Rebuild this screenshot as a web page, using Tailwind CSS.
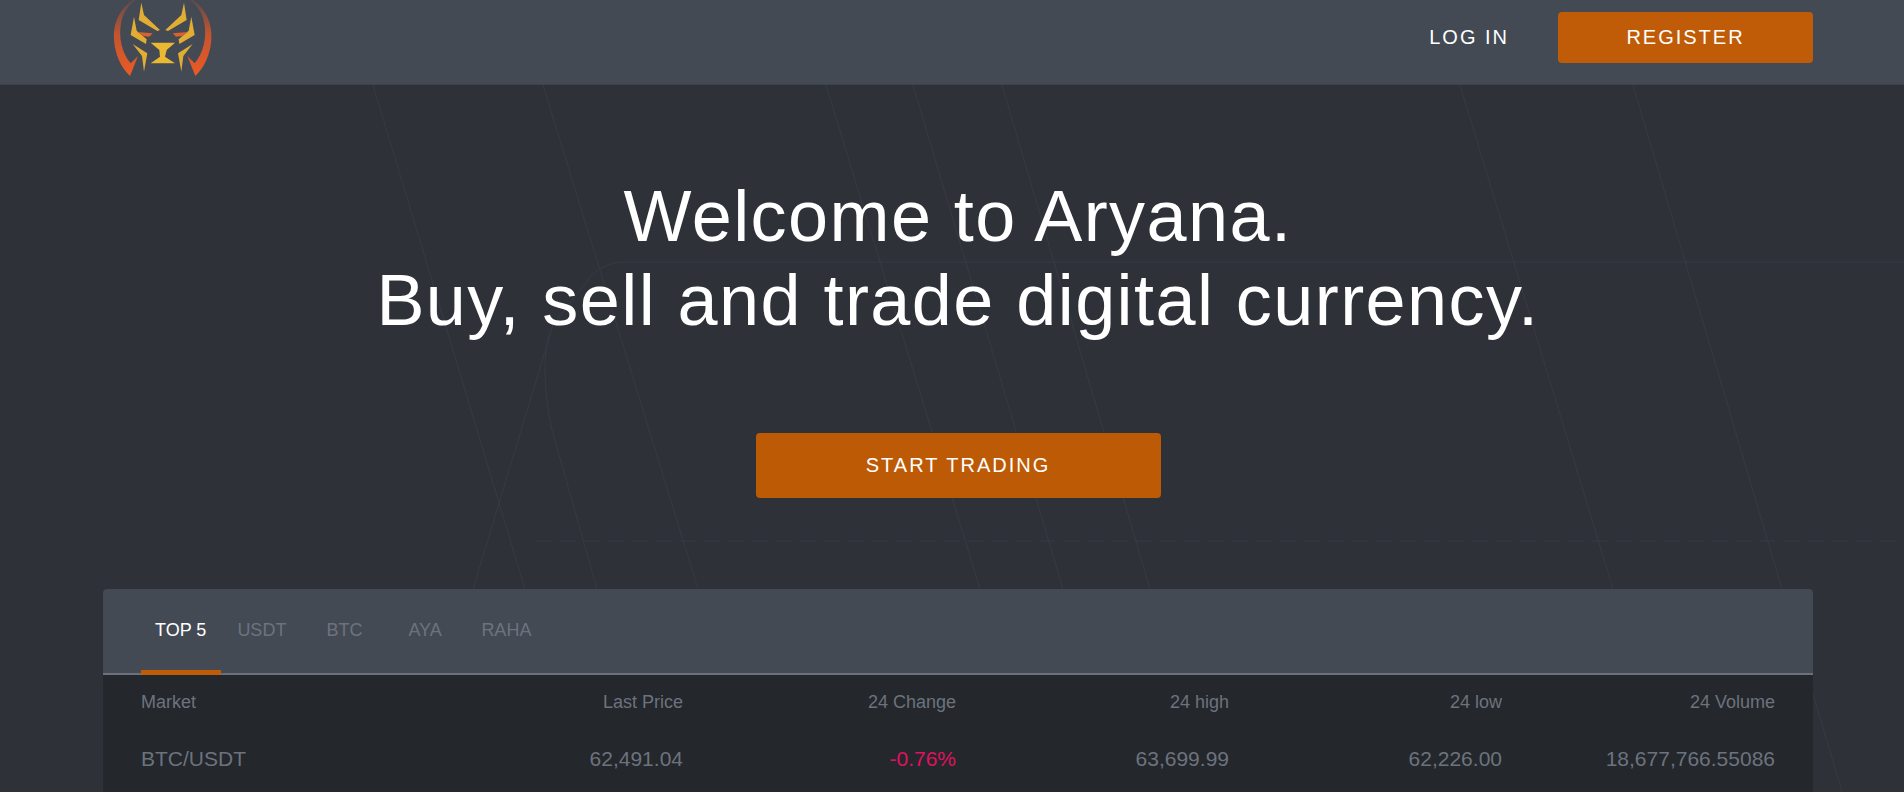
<!DOCTYPE html>
<html lang="en">
<head>
    <meta charset="UTF-8">
    <meta name="viewport" content="width=device-width, initial-scale=1.0">
    <title>Aryana</title>
    <script src="https://cdn.jsdelivr.net/npm/@tailwindcss/browser@4"></script>
</head>
<body class="relative h-[792px] overflow-hidden bg-[#2e3138] font-['Liberation_Sans',Arial,sans-serif]">
    <!-- background lines -->
    <svg class="absolute top-0 left-0" width="1904" height="792" fill="none" stroke="#363a42" stroke-width="1">
        <path d="M373 85L525 589"/>
        <path d="M543 85L698 589"/>
        <path d="M826 85L980 589"/>
        <path d="M913 85L1063 589"/>
        <path d="M1002 85L1150 589"/>
        <path d="M1460 85L1613 589"/>
        <path d="M1633 85L1842 792"/>
        <path d="M1904 262H625Q605 262 592 275L553 325Q545 340 545 370Q545 400 552 430L597 589"/>
        <path d="M553 325L473 589"/>
        <path d="M535 541H1904" stroke-dasharray="16 8"/>
    </svg>

    <header class="relative flex h-[85px] items-start justify-between overflow-hidden border-b border-[#3d424c] bg-[#434a54] pr-[91px] pl-[110px]">
        <svg width="110" height="80" viewBox="0 0 330 240">
            <defs>
                <linearGradient id="arc" x1="0" y1="0" x2="0" y2="1">
                    <stop offset="0" stop-color="#5e4a50"/>
                    <stop offset="0.45" stop-color="#c2552f"/>
                    <stop offset="1" stop-color="#ec5a24"/>
                </linearGradient>
                <g id="half">
                    <path fill="url(#arc)" d="M68 0C28 28 8 70 12 120C15 165 35 205 60 228L84 168L62 190C36 160 24 110 34 65C41 35 56 15 76 0Z"/>
                    <path fill="#e2ad33" d="M94 8L102 45L150 90L142 93L86 60Z"/>
                    <path fill="#e2ad33" d="M72 50L80 92L110 118L108 132L62 105Z"/>
                    <path fill="#d8612f" d="M82 96L128 100L118 110L100 108Z"/>
                    <path fill="#e2ad33" d="M68 132L112 160L102 215L96 168Z"/>
                </g>
            </defs>
            <use href="#half"/>
            <use href="#half" transform="translate(316 0) scale(-1 1)"/>
            <path fill="#eab931" d="M122 128H195L170 150L165 170L195 190H122L150 170L148 150Z"/>
        </svg>
        <div class="mt-[12px] flex h-[51px] items-center">
            <a href="#" class="-mt-[2px] text-[20px] tracking-[2px] text-white">LOG IN</a>
            <a href="#" class="ml-[49px] flex h-[51px] w-[255px] items-center justify-center rounded bg-[#c05c08] pb-[2px] text-[20px] tracking-[2px] text-white">REGISTER</a>
        </div>
    </header>

    <main class="relative">
        <div class="pl-[12px]">
            <h1 class="pt-[89px] text-center text-[72px] leading-[84px] tracking-[0.02em] text-white">
                Welcome to Aryana.<br>Buy, sell and trade digital currency.
            </h1>
            <div class="mt-[91px] flex justify-center">
                <a href="#" class="flex h-[65px] w-[405px] items-center justify-center rounded bg-[#bc5a06] pb-[2px] text-[20px] tracking-[2px] text-white">START TRADING</a>
            </div>
        </div>

        <section class="mx-[103px] mt-[91px] w-[1710px] overflow-hidden rounded-t bg-[#24272c]">
            <div class="flex h-[86px] border-b-2 border-[#6b717b] bg-[#434a54] pl-[38px] text-[18px]">
                <a href="#" class="-mb-0.5 border-b-[5px] border-[#c05c08] pt-[28px] pr-[15px] pl-[14px] text-white">TOP 5</a>
                <a href="#" class="w-[105px] pt-[28px] pl-[16px] text-[#6c737e]">USDT</a>
                <a href="#" class="w-[82px] pt-[28px] text-[#6c737e]">BTC</a>
                <a href="#" class="w-[73px] pt-[28px] text-[#6c737e]">AYA</a>
                <a href="#" class="pt-[28px] text-[#6c737e]">RAHA</a>
            </div>
            <div class="grid grid-cols-[269px_repeat(5,273px)] pt-[14px] pl-[38px] text-right text-[18px] text-[#6c737e]">
                <div class="text-left">Market</div>
                <div>Last Price</div>
                <div>24 Change</div>
                <div>24 high</div>
                <div>24 low</div>
                <div>24 Volume</div>
            </div>
            <div class="grid h-[100px] grid-cols-[269px_repeat(5,273px)] pt-[27px] pl-[38px] text-right text-[21px] text-[#6c737e]">
                <div class="text-left">BTC/USDT</div>
                <div>62,491.04</div>
                <div class="text-[#e0115f]">-0.76%</div>
                <div>63,699.99</div>
                <div>62,226.00</div>
                <div>18,677,766.55086</div>
            </div>
        </section>
    </main>
</body>
</html>
